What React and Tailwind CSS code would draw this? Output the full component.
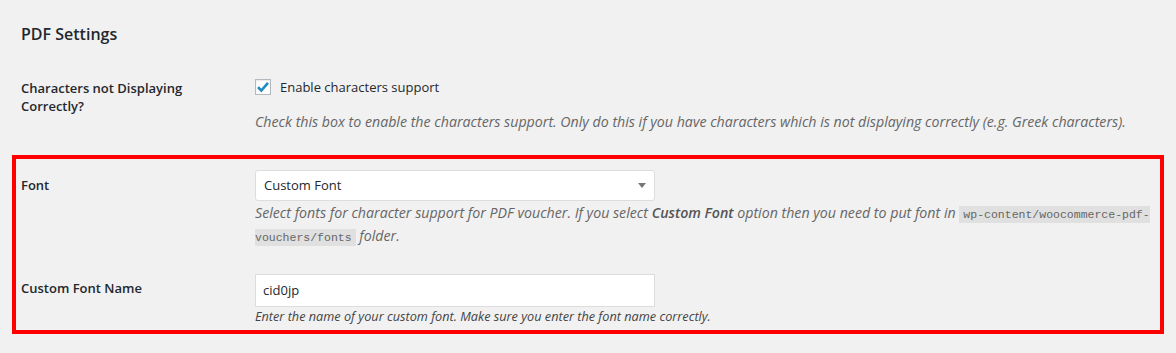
import React from "react";

const sans = "font-['Open_Sans','Noto_Sans',sans-serif]";

function Checkbox() {
  return (
    <span className="w-4 h-4 border border-[#b4b9be] bg-white flex items-center justify-center shadow-[inset_0_1px_2px_rgba(0,0,0,0.1)]">
      <svg width="14" height="14" viewBox="0 0 14 14">
        <path d="M2 7.2l3.3 3.3L12 2.8" fill="none" stroke="#1e8cbe" strokeWidth="2.6" strokeLinejoin="miter" />
      </svg>
    </span>
  );
}

export default function App() {
  return (
    <div className={`w-[1176px] h-[353px] bg-[#f1f1f1] text-[#23282d] ${sans} overflow-hidden`}>
      <h2 className="pl-[21px] pt-[23px] text-[16px] leading-[22px] font-semibold">PDF Settings</h2>
      <div className="flex pl-[21px] pt-[34px]">
        <div className="w-[234px] text-[13px] leading-[18px] font-semibold">
          Characters not Displaying
          <br />
          Correctly?
        </div>
        <div className="flex flex-col">
          <label className="flex items-center gap-[9px] text-[13px] leading-[16px]">
            <Checkbox />
            <span>Enable characters support</span>
          </label>
          <p className="mt-[18px] text-[14.2px] leading-[18px] italic text-[#666]">
            Check this box to enable the characters support. Only do this if you have characters which is not displaying correctly (e.g. Greek characters).
          </p>
        </div>
      </div>
      <div className="ml-[12px] mt-[24px] w-[1152px] h-[179px] border-4 border-[#ff0000] pl-[5px]">
        <div className="flex pt-[11px]">
          <div className="w-[234px] pt-[6px] text-[13px] leading-[18px] font-semibold">Font</div>
          <div className="flex flex-col">
            <div className="w-[400px] h-[31px] bg-white border border-[#ddd] rounded-[3px] flex items-center justify-between pl-[8px] pr-[8px] text-[13px]">
              <span>Custom Font</span>
              <svg width="8" height="5" viewBox="0 0 8 5">
                <path d="M0 0h8L4 5z" fill="#777" />
              </svg>
            </div>
            <p className="w-[900px] mt-[1px] text-[14.2px] leading-[21px] italic text-[#666]">
              Select fonts for character support for PDF voucher. If you select <b className="font-semibold text-[#555]">Custom Font</b> option then you need to put font in{" "}
              <code className="not-italic font-['Liberation_Mono',monospace] text-[11.5px] bg-[rgba(0,0,0,0.07)] px-[4px] py-[2px]">wp-content/woocommerce-pdf-vouchers/fonts</code>{" "}
              folder.
            </p>
          </div>
        </div>
        <div className="flex pt-[26px]">
          <div className="w-[234px] pt-[5px] text-[13px] leading-[18px] font-semibold">Custom Font Name</div>
          <div className="flex flex-col">
            <div className="w-[400px] h-[33px] bg-white border border-[#ddd] flex items-center pl-[7px] text-[13px]">cid0jp</div>
            <p className="mt-[0px] text-[12.7px] leading-[18px] italic text-[#444]">
              Enter the name of your custom font. Make sure you enter the font name correctly.
            </p>
          </div>
        </div>
      </div>
    </div>
  );
}
